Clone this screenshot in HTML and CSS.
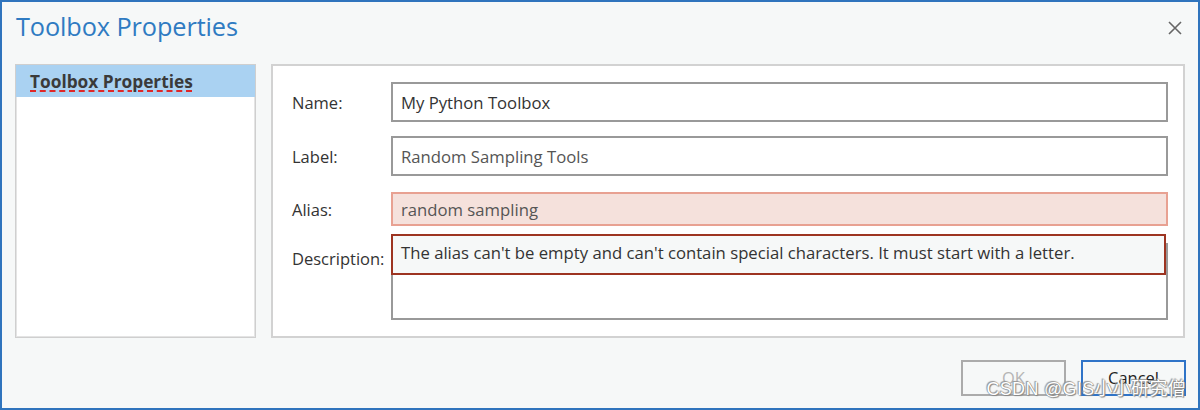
FILE: index.html
```html
<!DOCTYPE html>
<html>
<head>
<meta charset="utf-8">
<link rel="stylesheet" href="styles.css">
</head>
<body>
<div class="window">
  <div class="titlebar">
    <h1 class="title">Toolbox Properties</h1>
    <svg class="close" width="14" height="14" viewBox="0 0 14 14"><path d="M1 1 L13 13 M13 1 L1 13" stroke="#666" stroke-width="1.6" fill="none"/></svg>
  </div>
  <div class="main">
    <div class="nav">
      <div class="nav-item"><span class="spell">Toolbox Properties</span></div>
    </div>
    <div class="panel">
      <div class="row row-name">
        <div class="label">Name:</div>
        <div class="field">My Python Toolbox</div>
      </div>
      <div class="row row-label">
        <div class="label">Label:</div>
        <div class="field field-dim">Random Sampling Tools</div>
      </div>
      <div class="row row-alias">
        <div class="label">Alias:</div>
        <div class="field field-error">random sampling</div>
      </div>
      <div class="row row-desc">
        <div class="label label-top">Description:</div>
        <div class="desc-wrap">
          <div class="field field-area"></div>
          <div class="tooltip">The alias can't be empty and can't contain special characters. It must start with a letter.</div>
        </div>
      </div>
    </div>
  </div>
  <div class="footer">
    <div class="btn btn-disabled">OK</div>
    <div class="btn btn-primary">Cancel</div>
    <div class="watermark">CSDN @GIS小小研究僧</div>
  </div>
</div>
</body>
</html>
```

FILE: styles.css
```css
* { box-sizing: border-box; }
html, body { margin: 0; padding: 0; }
body {
  width: 1200px;
  height: 410px;
  overflow: hidden;
  font-family: "Open Sans", "Noto Sans", "Noto Sans CJK SC", sans-serif;
  color: #333;
}
.window {
  width: 1200px;
  height: 410px;
  border: 2px solid #2f74bd;
  background: #f6f8f8;
  display: flex;
  flex-direction: column;
  position: relative;
}
.titlebar {
  height: 62px;
  display: flex;
  align-items: flex-start;
  justify-content: space-between;
  padding: 0 16px 0 14px;
}
.title {
  margin: 7px 0 0 0;
  font-weight: normal;
  font-size: 25.3px;
  color: #2f7bc2;
  letter-spacing: -0.1px;
}
.close { margin-top: 19px; }
.main {
  display: flex;
  gap: 15px;
  padding: 0 13px 0 13px;
  height: 274px;
}
.nav {
  width: 241px;
  height: 274px;
  background: #fff;
  border: 1px solid #cfcfcf;
  box-shadow: inset 0 0 0 1px #e4e4e4;
}
.nav-item {
  height: 32px;
  background: #aad2f2;
  padding-left: 14px;
  display: flex;
  align-items: center;
  font-weight: bold;
  font-size: 17.3px;
  color: #3a3a3a;
}
.spell {
  text-decoration: underline dashed #e02828;
  text-decoration-thickness: 2px;
  text-underline-offset: 3px;
}
.panel {
  flex: 1;
  height: 274px;
  background: #fff;
  border: 2px solid #d2d2d2;
  padding: 16px 15px 0 19px;
}
.row {
  display: flex;
  align-items: center;
}
.label {
  width: 99px;
  font-size: 16.5px;
  color: #333;
  flex: none;
}
.field {
  flex: 1;
  border: 2px solid #999;
  background: #fff;
  font-size: 16.7px;
  color: #333;
  padding-left: 8px;
  display: flex;
  align-items: center;
}
.row-name .field { height: 40px; }
.row-label { margin-top: 14px; }
.row-label .field { height: 40px; color: #555; }
.row-alias { margin-top: 16px; }
.row-alias .field { height: 34px; }
.field-error {
  background: #f5e1dc;
  border-color: #e8a192;
  color: #555;
}
.row-desc { margin-top: 17px; align-items: flex-start; }
.label-top { margin-top: 4px; }
.desc-wrap {
  flex: 1;
  position: relative;
}
.field-area { height: 77px; }
.tooltip {
  position: absolute;
  left: 0;
  top: -9px;
  width: 775px;
  height: 41px;
  background: #f6f8f8;
  border: 2px solid #9d3421;
  font-size: 16.7px;
  color: #333;
  padding: 5px 0 0 8px;
}
.footer {
  flex: 1;
  display: flex;
  justify-content: flex-end;
  align-items: flex-start;
  gap: 15px;
  padding: 22px 12px 0 0;
  position: relative;
}
.btn {
  width: 105px;
  height: 36px;
  border: 2px solid #ababab;
  display: flex;
  align-items: center;
  justify-content: center;
  font-size: 16.5px;
  padding-bottom: 2px;
}
.btn-disabled { color: #b5b5b5; }
.btn-primary { border-color: #2f74c8; color: #222; }
.watermark {
  position: absolute;
  right: 12px;
  top: 41px;
  font-family: "Liberation Sans", "Noto Sans CJK SC", sans-serif;
  font-size: 18px;
  line-height: 20px;
  color: #fff;
  text-shadow: 0 0 1px #666, 1px 1px 1px #888, -1px -1px 1px #999;
  letter-spacing: 0.3px;
}
```
